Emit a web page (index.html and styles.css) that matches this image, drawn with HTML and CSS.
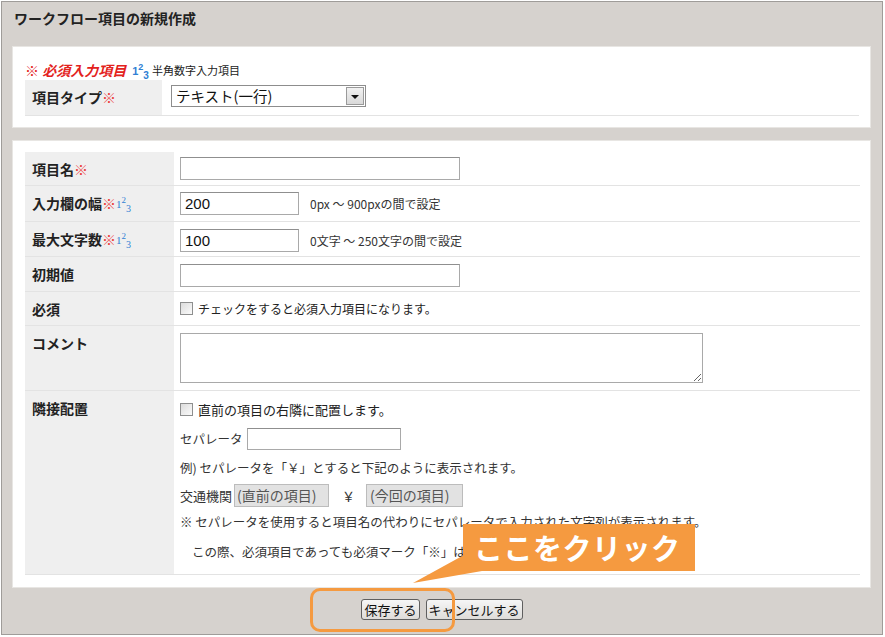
FILE: index.html
```html
<!DOCTYPE html>
<html lang="ja">
<head>
<meta charset="utf-8">
<title>ワークフロー項目の新規作成</title>
<link rel="stylesheet" href="styles.css">
</head>
<body>
<div class="page">
  <div class="frame">
    <div class="title">ワークフロー項目の新規作成</div>

    <div class="panel panel-top">
      <div class="legend">
        <span class="req-legend"><span class="mark">※</span> <em>必須入力項目</em></span>
        <span class="num"><span class="n1">1</span><span class="n2">2</span><span class="n3">3</span></span>
        <span class="legend-note">半角数字入力項目</span>
      </div>
      <div class="row row-type">
        <div class="label">項目タイプ<span class="req">※</span></div>
        <div class="value">
          <div class="select"><span class="select-text">テキスト(一行)</span><span class="arrow"></span></div>
        </div>
      </div>
    </div>

    <div class="panel panel-main">
      <div class="row h34">
        <div class="label">項目名<span class="req">※</span></div>
        <div class="value v5"><input class="text w280" type="text"></div>
      </div>
      <div class="row h36">
        <div class="label">入力欄の幅<span class="req">※</span><span class="num small"><span class="n1">1</span><span class="n2">2</span><span class="n3">3</span></span></div>
        <div class="value"><input class="text w119" type="text" value="200"><span class="hint">0px ～ 900pxの間で設定</span></div>
      </div>
      <div class="row h35">
        <div class="label">最大文字数<span class="req">※</span><span class="num small"><span class="n1">1</span><span class="n2">2</span><span class="n3">3</span></span></div>
        <div class="value v7"><input class="text w119" type="text" value="100"><span class="hint">0文字 ～ 250文字の間で設定</span></div>
      </div>
      <div class="row h35">
        <div class="label">初期値</div>
        <div class="value v7"><input class="text w280" type="text"></div>
      </div>
      <div class="row h34">
        <div class="label">必須</div>
        <div class="value v7">
          <label class="check"><span class="box"></span><span class="check-text">チェックをすると必須入力項目になります。</span></label>
        </div>
      </div>
      <div class="row h65">
        <div class="label">コメント</div>
        <div class="value v7"><textarea class="comment"></textarea></div>
      </div>
      <div class="row h184 last">
        <div class="label">隣接配置</div>
        <div class="value adj">
          <label class="check"><span class="box"></span><span class="check-text big">直前の項目の右隣に配置します。</span></label>
          <div class="line sep"><span class="txt">セパレータ</span><input class="text w154" type="text"></div>
          <div class="line ex"><span class="txt">例) セパレータを「￥」とすると下記のように表示されます。</span></div>
          <div class="line demo">
            <span class="txt">交通機関</span>
            <span class="ghost">(直前の項目)</span>
            <span class="yen">￥</span>
            <span class="ghost g2">(今回の項目)</span>
          </div>
          <div class="line note"><span class="txt">※ セパレータを使用すると項目名の代わりにセパレータで入力された文字列が表示されます。</span></div>
          <div class="line note2"><span class="txt">この際、必須項目であっても必須マーク「※」は表示されません。</span></div>
        </div>
      </div>
    </div>

    <div class="buttons">
      <button class="btn" type="button">保存する</button>
      <button class="btn" type="button">キャンセルする</button>
    </div>
  </div>

  <div class="callout">ここをクリック</div>
  <svg class="tail" width="80" height="40" viewBox="0 0 80 40"><polygon points="54,5 54,21 72,21 3,33" fill="#f59a40"/></svg>
  <div class="ring"></div>
</div>
</body>
</html>
```

FILE: styles.css
```css
* { box-sizing: border-box; }
body {
  margin: 0;
  font-family: "Noto Sans CJK JP", "Noto Sans", sans-serif;
  color: #222;
  background: #fff;
}
.page {
  position: relative;
  width: 885px;
  height: 637px;
  overflow: hidden;
}
.frame {
  margin: 1px 0 0 1px;
  width: 882px;
  height: 634px;
  border: 1px solid #9f9c99;
  background: #d6d2ce;
  display: flex;
  flex-direction: column;
}
.title {
  flex: none;
  height: 44px;
  padding: 6px 0 0 12px;
  font-size: 14px;
  font-weight: bold;
  line-height: 20px;
  color: #222;
}
.panel {
  flex: none;
  margin: 0 11px 0 10px;
  background: #fff;
  border: 1px solid #e8e6e3;
}
.panel-top {
  height: 82px;
  padding: 13px 11px 0 11px;
}
.panel-main {
  margin-top: 12px;
  height: 448px;
  padding: 11px 10px 0 12px;
}
.legend {
  height: 20px;
  display: flex;
  align-items: center;
  line-height: 20px;
}
.req-legend {
  color: #e3221d;
  font-size: 14px;
  font-weight: bold;
  margin-left: 1px;
}
.req-legend em { font-style: italic; }
.num {
  display: inline-flex;
  align-items: flex-start;
  height: 18px;
  margin-left: 6px;
  color: #2f7fd4;
  font-family: "Liberation Sans", sans-serif;
  font-weight: bold;
  font-size: 11px;
  line-height: 11px;
}
.num .n1 { margin-top: 5px; }
.num .n2 { margin-top: 1px; font-size: 9px; }
.num .n3 { margin-top: 9px; font-size: 10px; }
.num.small { margin-left: 0; font-weight: normal; font-family: "Liberation Serif", serif; }
.legend-note {
  margin-left: 3px;
  font-size: 11px;
  color: #222;
}
.row {
  display: grid;
  grid-template-columns: 149px 1fr;
  border-bottom: 1px solid #e3e3e3;
}
.row-type {
  margin-left: 1px;
  height: 36px;
  grid-template-columns: 137px 1fr;
}
.label {
  background: #efefef;
  padding: 8px 0 0 7px;
  font-size: 14px;
  font-weight: bold;
  line-height: 18px;
  display: flex;
  align-items: flex-start;
  white-space: nowrap;
}
.req {
  color: #ec3a3a;
  font-weight: normal;
}
.value {
  padding: 6px 0 0 6px;
  display: flex;
  align-items: flex-start;
}
.row-type .value { padding: 5px 0 0 9px; }
.value.v5 { padding-top: 5px; }
.value.v7 { padding-top: 7px; }
.h34 { height: 34px; }
.h35 { height: 35px; }
.h36 { height: 36px; }
.h65 { height: 65px; }
.h184 { height: 184px; }

.select {
  width: 195px;
  height: 22px;
  border: 1px solid #8d8d8d;
  display: flex;
  align-items: center;
  justify-content: space-between;
  padding: 0 1px 0 4px;
  background: #fff;
}
.select-text { font-size: 14.5px; line-height: 20px; color: #111; }
.arrow {
  width: 18px;
  height: 18px;
  border: 1px solid #9a9a9a;
  background: linear-gradient(#f2f2f2, #d9d9d9);
  position: relative;
}
.arrow::after {
  content: "";
  position: absolute;
  left: 4px;
  top: 7px;
  border-left: 4px solid transparent;
  border-right: 4px solid transparent;
  border-top: 4px solid #111;
}

.text {
  height: 23px;
  border: 1px solid #a9a9a9;
  border-top-color: #8f8f8f;
  padding: 0 4px;
  font-family: "Liberation Sans", sans-serif;
  font-size: 15px;
  color: #111;
  background: #fff;
  outline: none;
}
.w280 { width: 280px; }
.w119 { width: 119px; }
.w154 { width: 154px; height: 22px; }
.hint {
  margin-left: 11px;
  font-size: 12px;
  line-height: 23px;
  color: #333;
}
.check {
  display: flex;
  align-items: center;
  height: 18px;
}
.box {
  width: 13px;
  height: 13px;
  border: 1px solid #8e8f8f;
  background: linear-gradient(135deg, #dcdcdc, #fbfbfb);
}
.check-text {
  margin-left: 5px;
  font-size: 12px;
  color: #222;
}
.check-text.big { font-size: 13px; }
.comment {
  width: 523px;
  height: 50px;
  border: 1px solid #a9a9a9;
  font-family: "Liberation Sans", sans-serif;
  font-size: 13px;
  resize: both;
  outline: none;
}
.adj {
  flex-direction: column;
  padding-top: 9px;
}
.line {
  display: flex;
  align-items: center;
  font-size: 12.5px;
  color: #333;
}
.sep { margin-top: 9px; height: 23px; }
.sep .txt { margin-right: 4px; }
.ex { margin-top: 8px; height: 18px; }
.demo { margin-top: 7px; height: 24px; }
.demo .txt { font-size: 13px; margin-right: 2px; }
.ghost {
  width: 95px;
  height: 23px;
  border: 1px solid #bcbcbc;
  background: #e2e2e2;
  font-size: 14px;
  line-height: 21px;
  padding-left: 2px;
  color: #555;
  white-space: nowrap;
}
.ghost.g2 { width: 97px; padding-left: 3px; }
.yen { margin: 0 11px 0 13px; font-size: 13px; }
.note { margin-top: 5px; height: 18px; white-space: nowrap; }
.note2 { margin-top: 12px; height: 18px; padding-left: 12px; white-space: nowrap; }

.buttons {
  flex: 1;
  display: flex;
  justify-content: center;
  align-items: flex-start;
  gap: 6px;
  padding-top: 11px;
}
.btn {
  height: 21px;
  padding: 0 2px;
  border: 1px solid #5f5f5f;
  border-radius: 3px;
  background: linear-gradient(#f6f6f6, #dedcd9);
  font-family: "Noto Sans CJK JP", sans-serif;
  font-size: 13px;
  line-height: 19px;
  color: #111;
}

.callout {
  position: absolute;
  left: 463px;
  top: 524px;
  width: 232px;
  height: 47px;
  background: #f59a40;
  color: #fff;
  font-size: 29px;
  font-weight: bold;
  line-height: 47px;
  padding-left: 11px;
  white-space: nowrap;
  letter-spacing: 0.5px;
}
.tail {
  position: absolute;
  left: 410px;
  top: 550px;
}
.ring {
  position: absolute;
  left: 310px;
  top: 588px;
  width: 145px;
  height: 44px;
  border: 3px solid #f59a40;
  border-radius: 10px;
}
```
